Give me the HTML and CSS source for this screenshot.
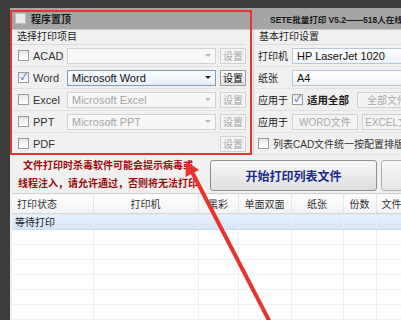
FILE: index.html
```html
<!DOCTYPE html>
<html lang="zh-CN">
  <head>
    <link rel="stylesheet" href="styles.css">
  </head>
  <body>
    <div class="window">
      <div class="titlebar">
        <div class="title-left">
          <span class="box"></span>
          <span class="title-pin">程序置顶</span>
        </div>
        <div class="title-right">SETE批量打印 V5.2——518人在线使用</div>
      </div>

      <div class="top">
        <div class="group group-left">
          <div class="group-label">选择打印项目</div>
          <div class="row">
            <span class="box"></span>
            <span class="name">ACAD</span>
            <div class="combo off"><span></span><i class="arrow"></i></div>
            <div class="btn small off">设置</div>
          </div>
          <div class="row">
            <span class="box checked">&#10003;</span>
            <span class="name">Word</span>
            <div class="combo active"><span>Microsoft Word</span><i class="arrow dark"></i></div>
            <div class="btn small">设置</div>
          </div>
          <div class="row">
            <span class="box"></span>
            <span class="name">Excel</span>
            <div class="combo off"><span>Microsoft Excel</span><i class="arrow"></i></div>
            <div class="btn small off">设置</div>
          </div>
          <div class="row">
            <span class="box"></span>
            <span class="name">PPT</span>
            <div class="combo off"><span>Microsoft PPT</span><i class="arrow"></i></div>
            <div class="btn small off">设置</div>
          </div>
          <div class="row">
            <span class="box"></span>
            <span class="name">PDF</span>
            <div class="spacer"></div>
            <div class="btn small off">设置</div>
          </div>
        </div>

        <div class="group group-right">
          <div class="group-label">基本打印设置</div>
          <div class="row">
            <span class="label">打印机</span>
            <div class="combo wide"><span>HP LaserJet 1020</span></div>
          </div>
          <div class="row">
            <span class="label">纸张</span>
            <div class="combo wide"><span>A4</span></div>
          </div>
          <div class="row">
            <span class="label">应用于</span>
            <span class="box checked">&#10003;</span>
            <span class="bold">适用全部</span>
            <div class="btn off wide-btn">全部文件</div>
          </div>
          <div class="row">
            <span class="label">应用于</span>
            <div class="btn off">WORD文件</div>
            <div class="btn off wide-btn">EXCEL文件</div>
          </div>
          <div class="row">
            <span class="box"></span>
            <span class="cad">列表CAD文件统一按配置排版打印</span>
          </div>
        </div>
      </div>

      <div class="actions">
        <div class="warn">文件打印时杀毒软件可能会提示病毒或<br>线程注入，请允许通过，否则将无法打印</div>
        <div class="start-btn">开始打印列表文件</div>
        <div class="next-btn"></div>
      </div>

      <table class="list">
        <colgroup>
          <col style="width: 81px">
          <col style="width: 105px">
          <col style="width: 40px">
          <col style="width: 53px">
          <col style="width: 52px">
          <col style="width: 33px">
          <col style="width: 60px">
        </colgroup>
        <thead>
          <tr>
            <th class="first">打印状态</th>
            <th>打印机</th>
            <th>黑彩</th>
            <th>单面双面</th>
            <th>纸张</th>
            <th>份数</th>
            <th class="first">文件名</th>
          </tr>
        </thead>
        <tbody>
          <tr class="selected"><td>等待打印</td><td></td><td></td><td></td><td></td><td></td><td></td></tr>
          <tr><td></td><td></td><td></td><td></td><td></td><td></td><td></td></tr>
          <tr><td></td><td></td><td></td><td></td><td></td><td></td><td></td></tr>
          <tr><td></td><td></td><td></td><td></td><td></td><td></td><td></td></tr>
          <tr><td></td><td></td><td></td><td></td><td></td><td></td><td></td></tr>
          <tr><td></td><td></td><td></td><td></td><td></td><td></td><td></td></tr>
          <tr><td></td><td></td><td></td><td></td><td></td><td></td><td></td></tr>
        </tbody>
      </table>
    </div>

    <!-- annotation drawn over the screenshot -->
    <div class="mark"></div>
    <svg class="arrow-mark" width="401" height="320" viewBox="0 0 401 320">
      <line x1="191" y1="170" x2="274" y2="330" stroke="#e8342f" stroke-width="4"/>
      <polygon points="186,161 185.5,177 199,170" fill="#e8342f"/>
    </svg>
  </body>
</html>
```

FILE: styles.css
```css
html, body {
  margin: 0;
  height: 100%;
  overflow: hidden;
}

body {
  background-color: #3b3b3b;
  font-family: "Liberation Sans", "Noto Sans CJK SC", sans-serif;
  font-size: 10px;
  color: #222;
  position: relative;
}

.window {
  margin: 8px 0 0 10px;
  width: 420px;
  height: 320px;
  background-color: #f0f0f0;
}

.titlebar {
  display: flex;
  align-items: center;
  height: 21px;
  background-color: #a5a5a5;
  border-bottom: 1px solid #c8c8c8;
}

.title-left {
  width: 248px;
  display: flex;
  align-items: center;
  gap: 5px;
  padding-left: 5px;
}

.title-pin {
  font-weight: bold;
  font-size: 10px;
  color: #1a1a1a;
}

.title-right {
  font-size: 8.5px;
  font-weight: bold;
  color: #1a1a1a;
  white-space: nowrap;
  padding-left: 7px;
}

.box {
  width: 9px;
  height: 9px;
  border: 1px solid #9a9a9a;
  background: linear-gradient(#e6e6e6, #ffffff);
  flex: none;
  display: flex;
  align-items: center;
  justify-content: center;
  font-size: 9px;
  line-height: 1;
  color: #2a4fc0;
}

.titlebar .box {
  background: #e9e9e9;
  border-color: #c0c0c0;
}

.top {
  display: flex;
  gap: 7px;
  padding-left: 2px;
}

.group-left {
  width: 238px;
}

.group-right {
  flex: 1;
}

.group-label {
  height: 14px;
  line-height: 14px;
  padding-left: 5px;
  font-size: 10px;
  border-bottom: 1px solid #dcdcdc;
}

.row {
  height: 21px;
  display: flex;
  align-items: center;
  gap: 4px;
  padding-left: 6px;
  border-bottom: 1px solid #e2e2e2;
}

.name {
  width: 30px;
  font-size: 11px;
  color: #333;
}

.combo {
  width: 149px;
  height: 16px;
  box-sizing: border-box;
  border: 1px solid #d2d2d2;
  background: #f7f7f7;
  display: flex;
  align-items: center;
  justify-content: space-between;
  padding: 0 4px;
  font-size: 11px;
}

.combo.off {
  color: #a5a5a5;
}

.combo.active {
  border-color: #7f9db9;
  background: linear-gradient(#fafdff, #e4edf6);
  color: #111;
}

.combo.wide {
  width: 150px;
  flex: none;
  border-color: #b9c7d6;
  background: linear-gradient(#ffffff, #eef2f6);
  color: #111;
}

.arrow {
  width: 0;
  height: 0;
  border-left: 3px solid transparent;
  border-right: 3px solid transparent;
  border-top: 3px solid #b8b8b8;
}

.arrow.dark {
  border-top-color: #222;
}

.spacer {
  width: 149px;
}

.btn {
  height: 16px;
  box-sizing: border-box;
  border: 1px solid #9c9c9c;
  background: linear-gradient(#fbfbfb, #e2e2e2);
  display: flex;
  align-items: center;
  justify-content: center;
  padding: 0 6px;
  font-size: 10px;
  color: #111;
  white-space: nowrap;
}

.btn.small {
  width: 26px;
  padding: 0;
}

.btn.off {
  border-color: #d0d0d0;
  background: #f4f4f4;
  color: #a8a8a8;
}

.wide-btn {
  width: 60px;
  flex: none;
}

.group-right .row {
  padding-left: 4px;
  border-left: 1px solid #d8d8d8;
}

.group-right .group-label {
  border-left: 1px solid #d8d8d8;
}

.label {
  width: 30px;
  font-size: 10px;
}

.bold {
  font-weight: bold;
  font-size: 10.5px;
  margin-right: 4px;
}

.cad {
  font-size: 10px;
  white-space: nowrap;
  color: #333;
}

.actions {
  display: flex;
  align-items: center;
  height: 36px;
  margin-top: 2px;
}

.warn {
  width: 196px;
  text-align: center;
  color: #9c0b0b;
  font-weight: bold;
  font-size: 10px;
  line-height: 18px;
}

.start-btn {
  margin-left: 4px;
  width: 167px;
  height: 31px;
  box-sizing: border-box;
  border: 1px solid #8f8f8f;
  border-radius: 3px;
  background: linear-gradient(#f8f8f8, #dedede);
  display: flex;
  align-items: center;
  justify-content: center;
  font-size: 12px;
  font-weight: bold;
  color: #1b2b8c;
}

.next-btn {
  margin-left: 4px;
  width: 40px;
  height: 31px;
  box-sizing: border-box;
  border: 1px solid #b0b0b0;
  border-radius: 3px;
  background: linear-gradient(#f8f8f8, #e6e6e6);
}

.list {
  margin-left: 2px;
  border-collapse: collapse;
  table-layout: fixed;
  width: 424px;
  background-color: #ffffff;
  border-top: 1px solid #d0d0d0;
}

.list th {
  height: 19px;
  padding: 0;
  font-weight: normal;
  font-size: 10px;
  color: #333;
  text-align: center;
  background: linear-gradient(#ffffff, #f2f2f2);
  border-right: 1px solid #e4e4e4;
  border-bottom: 1px solid #d8d8d8;
  white-space: nowrap;
  overflow: hidden;
}

.list th.first {
  text-align: left;
  padding-left: 5px;
}

.list td {
  height: 14px;
  padding: 0 0 0 3px;
  font-size: 10px;
  border-right: 1px solid #eeeeee;
  border-bottom: 1px solid #f0f0f0;
}

.list tr.selected td {
  background: linear-gradient(#e6f0fd, #d4e4f8);
  border-bottom-color: #c9dcf3;
}

.mark {
  position: absolute;
  left: 10px;
  top: 10px;
  width: 238px;
  height: 141px;
  border: 2px solid #e8342f;
}

.arrow-mark {
  position: absolute;
  left: 0;
  top: 0;
}
```
